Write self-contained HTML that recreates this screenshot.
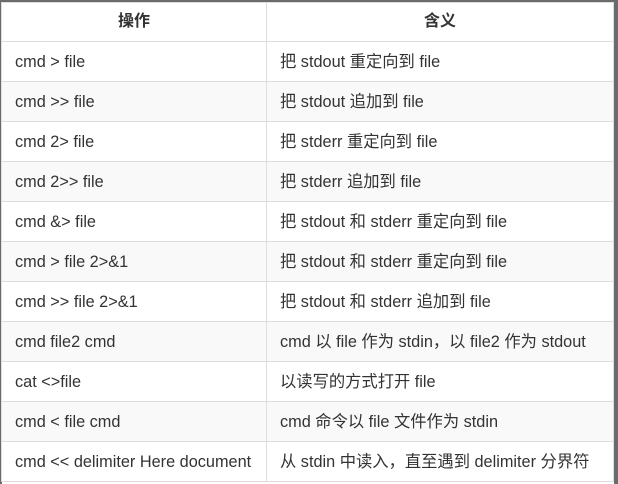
<!DOCTYPE html>
<html><head><meta charset="utf-8"><style>
html,body{margin:0;padding:0;}
body{width:618px;height:484px;background:#6b6b6b;position:relative;overflow:hidden;font-family:"Liberation Sans","Noto Sans CJK SC",sans-serif;}
.wrap{position:absolute;left:2px;top:3px;width:612px;height:481px;background:#fff;}
table{border-collapse:collapse;width:613px;table-layout:fixed;margin-left:-1px;margin-top:-1px;}
td,th{border:1px solid #ddd;height:39px;padding:0 0 0 13px;font-size:16.3px;line-height:20px;color:#333;text-align:left;vertical-align:middle;white-space:nowrap;}
th{text-align:center;padding:0;font-weight:bold;font-size:16px;height:38px;}
tr:nth-child(odd) td{background:#f9f9f9;}
col.a{width:265px;}
</style></head><body><div class="wrap"><table>
<colgroup><col class="a"><col></colgroup>
<tr><th>操作</th><th>含义</th></tr>
<tr><td>cmd &gt; file</td><td>把 stdout 重定向到 file</td></tr>
<tr><td>cmd &gt;&gt; file</td><td>把 stdout 追加到 file</td></tr>
<tr><td>cmd 2&gt; file</td><td>把 stderr 重定向到 file</td></tr>
<tr><td>cmd 2&gt;&gt; file</td><td>把 stderr 追加到 file</td></tr>
<tr><td>cmd &amp;&gt; file</td><td>把 stdout 和 stderr 重定向到 file</td></tr>
<tr><td>cmd &gt; file 2&gt;&amp;1</td><td>把 stdout 和 stderr 重定向到 file</td></tr>
<tr><td>cmd &gt;&gt; file 2&gt;&amp;1</td><td>把 stdout 和 stderr 追加到 file</td></tr>
<tr><td>cmd file2 cmd</td><td>cmd 以 file 作为 stdin，以 file2 作为 stdout</td></tr>
<tr><td>cat &lt;&gt;file</td><td>以读写的方式打开 file</td></tr>
<tr><td>cmd &lt; file cmd</td><td>cmd 命令以 file 文件作为 stdin</td></tr>
<tr><td>cmd &lt;&lt; delimiter Here document</td><td>从 stdin 中读入，直至遇到 delimiter 分界符</td></tr>
</table></div></body></html>
